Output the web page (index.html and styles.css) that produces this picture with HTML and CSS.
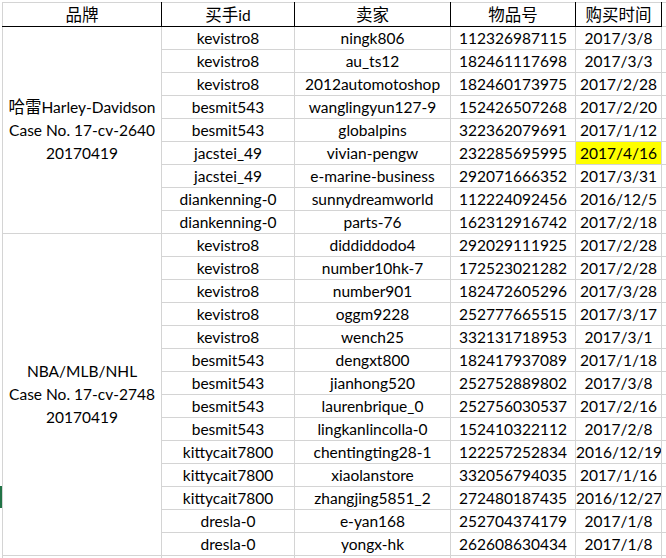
FILE: index.html
```html
<!DOCTYPE html>
<html lang="zh-CN">
<head>
<meta charset="utf-8">
<title>Sheet</title>
<link rel="stylesheet" href="styles.css">
</head>
<body>
<div class="sheet">
  <span class="row-marker"></span>
  <table class="grid">
    <colgroup>
      <col class="c1"><col class="c2"><col class="c3"><col class="c4"><col class="c5"><col class="c6">
    </colgroup>
    <thead>
      <tr>
        <th class="first"><span class="cjk">品牌</span></th>
        <th><span class="cjk">买手</span>id</th>
        <th><span class="cjk">卖家</span></th>
        <th><span class="cjk">物品号</span></th>
        <th class="last"><span class="cjk">购买时间</span></th>
        <td class="extra"></td>
      </tr>
    </thead>
    <tbody>
      <tr>
        <td class="brand" rowspan="9"><span class="cjk">哈雷</span>Harley-Davidson<br>Case No. 17-cv-2640<br>20170419</td>
        <td>kevistro8</td><td>ningk806</td><td>112326987115</td><td>2017/3/8</td><td class="extra"></td>
      </tr>
      <tr><td>kevistro8</td><td>au_ts12</td><td>182461117698</td><td>2017/3/3</td><td class="extra"></td></tr>
      <tr><td>kevistro8</td><td>2012automotoshop</td><td>182460173975</td><td>2017/2/28</td><td class="extra"></td></tr>
      <tr><td>besmit543</td><td>wanglingyun127-9</td><td>152426507268</td><td>2017/2/20</td><td class="extra"></td></tr>
      <tr><td>besmit543</td><td>globalpins</td><td>322362079691</td><td>2017/1/12</td><td class="extra"></td></tr>
      <tr><td>jacstei_49</td><td>vivian-pengw</td><td>232285695995</td><td class="hl">2017/4/16</td><td class="extra"></td></tr>
      <tr><td>jacstei_49</td><td>e-marine-business</td><td>292071666352</td><td>2017/3/31</td><td class="extra"></td></tr>
      <tr><td>diankenning-0</td><td>sunnydreamworld</td><td>112224092456</td><td>2016/12/5</td><td class="extra"></td></tr>
      <tr><td>diankenning-0</td><td>parts-76</td><td>162312916742</td><td>2017/2/18</td><td class="extra"></td></tr>
      <tr>
        <td class="brand" rowspan="14">NBA/MLB/NHL<br>Case No. 17-cv-2748<br>20170419</td>
        <td>kevistro8</td><td>diddiddodo4</td><td>292029111925</td><td>2017/2/28</td><td class="extra"></td>
      </tr>
      <tr><td>kevistro8</td><td>number10hk-7</td><td>172523021282</td><td>2017/2/28</td><td class="extra"></td></tr>
      <tr><td>kevistro8</td><td>number901</td><td>182472605296</td><td>2017/3/28</td><td class="extra"></td></tr>
      <tr><td>kevistro8</td><td>oggm9228</td><td>252777665515</td><td>2017/3/17</td><td class="extra"></td></tr>
      <tr><td>kevistro8</td><td>wench25</td><td>332131718953</td><td>2017/3/1</td><td class="extra"></td></tr>
      <tr><td>besmit543</td><td>dengxt800</td><td>182417937089</td><td>2017/1/18</td><td class="extra"></td></tr>
      <tr><td>besmit543</td><td>jianhong520</td><td>252752889802</td><td>2017/3/8</td><td class="extra"></td></tr>
      <tr><td>besmit543</td><td>laurenbrique_0</td><td>252756030537</td><td>2017/2/16</td><td class="extra"></td></tr>
      <tr><td>besmit543</td><td>lingkanlincolla-0</td><td>152410322112</td><td>2017/2/8</td><td class="extra"></td></tr>
      <tr><td>kittycait7800</td><td>chentingting28-1</td><td>122257252834</td><td>2016/12/19</td><td class="extra"></td></tr>
      <tr><td>kittycait7800</td><td>xiaolanstore</td><td>332056794035</td><td>2017/1/16</td><td class="extra"></td></tr>
      <tr><td>kittycait7800</td><td>zhangjing5851_2</td><td>272480187435</td><td>2016/12/27</td><td class="extra"></td></tr>
      <tr><td>dresla-0</td><td>e-yan168</td><td>252704374179</td><td>2017/1/8</td><td class="extra"></td></tr>
      <tr><td>dresla-0</td><td>yongx-hk</td><td>262608630434</td><td>2017/1/8</td><td class="extra"></td></tr>
      <tr class="partial"><td></td><td></td><td></td><td></td><td></td><td class="extra"></td></tr>
    </tbody>
  </table>
</div>
</body>
</html>
```

FILE: styles.css
```css
html, body {
  margin: 0;
  padding: 0;
  background: #ffffff;
}

body {
  width: 666px;
  height: 558px;
  overflow: hidden;
  font-family: Lato, "Noto Sans CJK SC", sans-serif;
  font-size: 15.5px;
  color: #000000;
}

.sheet {
  position: relative;
  padding: 2px 0 0 2px;
}

.row-marker {
  position: absolute;
  left: 0;
  top: 486px;
  width: 2px;
  height: 22px;
  background: #217346;
}

.grid {
  border-collapse: collapse;
  table-layout: fixed;
  width: 680px;
}

.c1 { width: 159px; }
.c2 { width: 133px; }
.c3 { width: 156px; }
.c4 { width: 125px; }
.c5 { width: 86px; }
.c6 { width: 21px; }

.grid th,
.grid td {
  height: 22px;
  padding: 0;
  line-height: 22px;
  text-align: center;
  white-space: nowrap;
  overflow: hidden;
  border: 1px solid #d4d4d4;
  font-weight: normal;
}

.grid th {
  border-left: 1px solid #000000;
  border-right: 1px solid #000000;
  border-bottom: 1px solid #000000;
  border-top: 1px solid #d4d4d4;
}

.grid th.first {
  border-left: 1px solid #d4d4d4;
}

.grid .extra {
  border-left: 1px solid #000000;
}

.grid thead .extra {
  border-bottom: 1px solid #d4d4d4;
}

.cjk {
  font-family: "Noto Sans CJK SC", sans-serif;
  font-size: 16.5px;
}

.grid td.brand {
  vertical-align: middle;
  line-height: 23px;
}

.grid td.hl {
  background: #ffff00;
}

.grid .partial td {
  height: 10px;
}
```
